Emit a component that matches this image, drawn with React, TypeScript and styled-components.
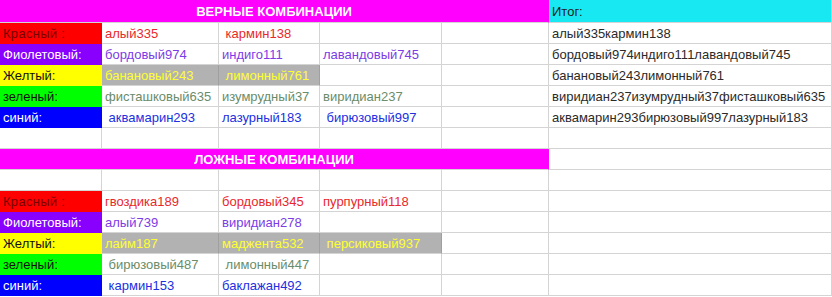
import styled, { createGlobalStyle } from 'styled-components';

const GlobalStyle = createGlobalStyle`
  html, body {
    margin: 0;
    padding: 0;
    background: #ffffff;
  }
  body {
    font-family: "Liberation Sans", Arial, sans-serif;
    font-size: 13px;
  }
`;

type Tone = 'red' | 'violet' | 'yellow' | 'green' | 'blue';

const tones: Record<Tone, { bg: string; label: string; text: string }> = {
  red: { bg: '#ff0000', label: '#7a0000', text: '#e8282c' },
  violet: { bg: '#8a00ff', label: '#ffffff', text: '#7b3ce6' },
  yellow: { bg: '#ffff00', label: '#111111', text: '#ffff30' },
  green: { bg: '#00ff00', label: '#111111', text: '#6a8c6a' },
  blue: { bg: '#0000ff', label: '#ffffff', text: '#2030e0' },
};

type Row = { label: string; tone: Tone; items: string[]; total?: string };

const trueRows: Row[] = [
  { label: 'Красный :', tone: 'red', items: ['алый335', ' кармин138'], total: 'алый335кармин138' },
  {
    label: 'Фиолетовый:',
    tone: 'violet',
    items: ['бордовый974', 'индиго111', 'лавандовый745'],
    total: 'бордовый974индиго111лавандовый745',
  },
  { label: 'Желтый:', tone: 'yellow', items: ['банановый243', ' лимонный761'], total: 'банановый243лимонный761' },
  {
    label: 'зеленый:',
    tone: 'green',
    items: ['фисташковый635', 'изумрудный37', 'виридиан237'],
    total: 'виридиан237изумрудный37фисташковый635',
  },
  {
    label: 'синий:',
    tone: 'blue',
    items: [' аквамарин293', 'лазурный183', ' бирюзовый997'],
    total: 'аквамарин293бирюзовый997лазурный183',
  },
];

const falseRows: Row[] = [
  { label: 'Красный :', tone: 'red', items: ['гвоздика189', 'бордовый345', 'пурпурный118'] },
  { label: 'Фиолетовый:', tone: 'violet', items: ['алый739', 'виридиан278'] },
  { label: 'Желтый:', tone: 'yellow', items: ['лайм187', 'маджента532', ' персиковый937'] },
  { label: 'зеленый:', tone: 'green', items: [' бирюзовый487', ' лимонный447'] },
  { label: 'синий:', tone: 'blue', items: [' кармин153', 'баклажан492'] },
];

const Sheet = styled.div`
  display: grid;
  grid-template-columns: 102px 117px 101px 122px 107px 1fr;
  grid-template-rows: 23px;
  grid-auto-rows: 21px;
  width: 832px;
  overflow: hidden;
`;

const Cell = styled.div<{ $span?: number }>`
  box-sizing: border-box;
  grid-column: span ${({ $span }) => $span || 1};
  display: flex;
  align-items: center;
  padding: 0 3px;
  white-space: pre;
  overflow: hidden;
  background: #ffffff;
  color: #2a2a2a;
  border-right: 1px solid #d4d4d4;
  border-bottom: 1px solid #d4d4d4;
`;

const Banner = styled(Cell)`
  justify-content: center;
  background: #ff00ff;
  color: #ffffff;
  font-weight: 700;
  border-right-color: #ff00ff;
`;

const TotalHead = styled(Cell)`
  background: #18e8f2;
  color: #222222;
`;

const Label = styled(Cell)<{ $tone: Tone }>`
  background: ${({ $tone }) => tones[$tone].bg};
  color: ${({ $tone }) => tones[$tone].label};
  border-color: ${({ $tone }) => tones[$tone].bg};
  letter-spacing: ${({ $tone }) => ($tone === 'red' ? '0.3px' : '0')};
`;

const Item = styled(Cell)<{ $tone: Tone; $filled: boolean }>`
  background: ${({ $filled }) => ($filled ? '#b2b2b2' : '#ffffff')};
  color: ${({ $tone }) => tones[$tone].text};
  border-right-color: ${({ $filled }) => ($filled ? '#a0a0a0' : '#d4d4d4')};
`;

const DataRow = ({ row, withTotal }: { row: Row; withTotal: boolean }) => {
  const cells = [0, 1, 2, 3];
  return (
    <>
      <Label $tone={row.tone}>{row.label}</Label>
      {cells.map((i) => {
        const text = row.items[i];
        const filled = row.tone === 'yellow' && text !== undefined;
        return (
          <Item key={i} $tone={row.tone} $filled={filled}>
            {text || ''}
          </Item>
        );
      })}
      <Cell>{withTotal ? row.total : ''}</Cell>
    </>
  );
};

const EmptyRow = () => (
  <>
    {[0, 1, 2, 3, 4, 5].map((i) => (
      <Cell key={i} />
    ))}
  </>
);

export default function App() {
  return (
    <>
      <GlobalStyle />
      <Sheet>
        <Banner $span={5}>ВЕРНЫЕ КОМБИНАЦИИ</Banner>
        <TotalHead>Итог:</TotalHead>
        {trueRows.map((row) => (
          <DataRow key={row.label} row={row} withTotal />
        ))}
        <EmptyRow />
        <Banner $span={5}>ЛОЖНЫЕ КОМБИНАЦИИ</Banner>
        <Cell />
        <EmptyRow />
        {falseRows.map((row) => (
          <DataRow key={row.label} row={row} withTotal={false} />
        ))}
      </Sheet>
    </>
  );
}
